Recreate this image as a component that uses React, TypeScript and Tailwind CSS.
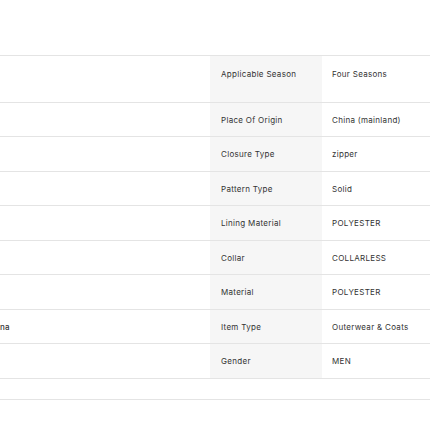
import React from 'react'

const specs = [
  { label: 'Applicable Season', value: 'Four Seasons' },
  { label: 'Place Of Origin', value: 'China (mainland)' },
  { label: 'Closure Type', value: 'zipper' },
  { label: 'Pattern Type', value: 'Solid' },
  { label: 'Lining Material', value: 'POLYESTER' },
  { label: 'Collar', value: 'COLLARLESS' },
  { label: 'Material', value: 'POLYESTER' },
  { label: 'Item Type', value: 'Outerwear & Coats', left: 'na' },
  { label: 'Gender', value: 'MEN' },
]

// row heights include the bottom border
const heights = ['h-[47px]', 'h-[34px]', 'h-[35px]', 'h-[34px]', 'h-[35px]', 'h-[34px]', 'h-[35px]', 'h-[34px]', 'h-[35px]']

export default function App() {
  return (
    <div
      className="w-[430px] h-[430px] bg-white overflow-hidden text-[8px] tracking-[0.3px] text-[#333]"
      style={{ fontFamily: 'Inter, "Liberation Sans", sans-serif' }}
    >
      <div className="h-[56px] border-b border-[#e4e4e4]" />
      {specs.map((s, i) => (
        <div
          key={s.label}
          className={`flex border-b border-[#e4e4e4] box-border ${heights[i]} ${i === 0 ? 'items-start' : 'items-stretch'}`}
        >
          <div className="w-[210px] flex items-center">
            {s.left && <span className="font-medium">{s.left}</span>}
          </div>
          <div
            className={`w-[112px] self-stretch bg-[#f6f6f6] pl-[11px] flex ${i === 0 ? 'items-start pt-[12px]' : 'items-center'}`}
          >
            {s.label}
          </div>
          <div className={`flex-1 pl-[10px] flex ${i === 0 ? 'items-start pt-[12px]' : 'items-center'}`}>
            {s.value}
          </div>
        </div>
      ))}
      <div className="h-[21px] border-b border-[#e4e4e4]" />
    </div>
  )
}
